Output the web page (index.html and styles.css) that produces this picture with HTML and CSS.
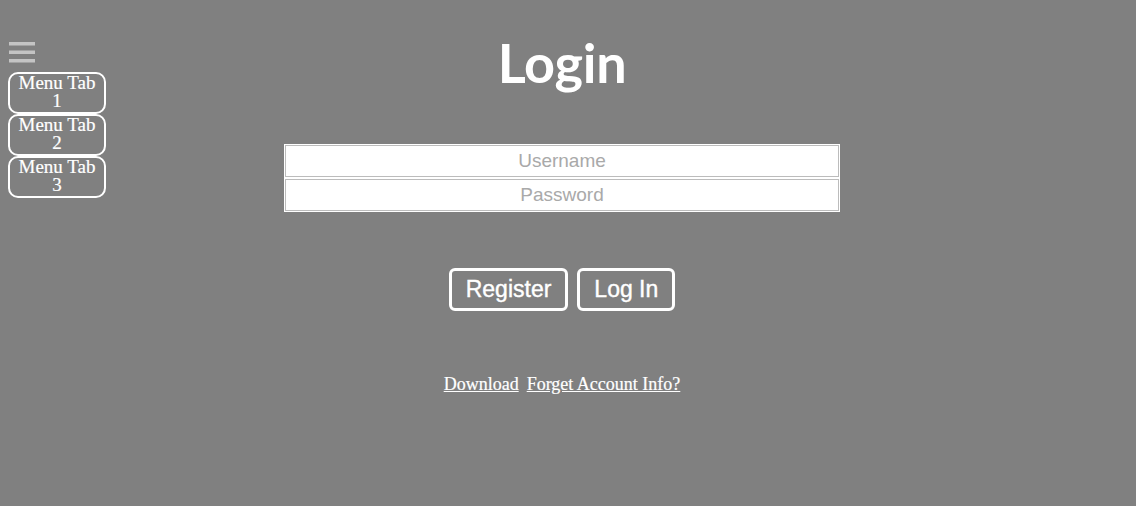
FILE: index.html
```html
<!DOCTYPE html>
<html>
<head>
<meta charset="utf-8">
<link rel="stylesheet" href="styles.css">
</head>
<body>
<nav class="sidebar">
  <svg class="burger" width="27" height="22" viewBox="0 0 27 22">
    <rect x="0" y="0" width="26" height="3.5" fill="#c4c4c4"/>
    <rect x="0" y="8.5" width="26" height="3.5" fill="#c4c4c4"/>
    <rect x="0" y="17" width="26" height="3.5" fill="#c4c4c4"/>
  </svg>
  <a class="tab">Menu Tab 1</a>
  <a class="tab">Menu Tab 2</a>
  <a class="tab">Menu Tab 3</a>
</nav>
<main class="main">
  <h1 class="title">Login</h1>
  <div class="fields">
    <input class="field" type="text" placeholder="Username">
    <input class="field" type="password" placeholder="Password">
  </div>
  <div class="actions">
    <button class="btn">Register</button>
    <button class="btn">Log In</button>
  </div>
  <div class="links">
    <a class="link" href="#">Download</a>
    <a class="link" href="#">Forget Account Info?</a>
  </div>
</main>
</body>
</html>
```
FILE: styles.css
```css
html, body {
  margin: 0;
  padding: 0;
  background: #808080;
  height: 100%;
}
body {
  position: relative;
  font-family: "Liberation Sans", Arial, sans-serif;
  color: #fff;
}
.sidebar {
  position: absolute;
  left: 8px;
  top: 42px;
  width: 98px;
  display: flex;
  flex-direction: column;
}
.burger {
  display: block;
  margin-left: 1px;
  margin-bottom: 8px;
}
.tab {
  box-sizing: border-box;
  width: 98px;
  height: 42px;
  border: 2px solid #fff;
  border-radius: 10px;
  padding: 0 4px 2px;
  font-family: "Liberation Serif", "Times New Roman", serif;
  font-size: 19px;
  line-height: 18px;
  text-align: center;
  color: #fff;
  -webkit-text-stroke: 0.2px #fff;
  display: flex;
  align-items: center;
  justify-content: center;
}
.main {
  padding-right: 12px;
  display: flex;
  flex-direction: column;
  align-items: center;
  padding-top: 31px;
}
.title {
  margin: 0;
  font-family: Lato, "Open Sans", sans-serif;
  font-weight: 700;
  font-size: 54px;
  letter-spacing: -0.3px;
  line-height: 64px;
  color: #fff;
}
.fields {
  margin-top: 50px;
  display: flex;
  flex-direction: column;
  gap: 2px;
}
.field {
  box-sizing: border-box;
  width: 554px;
  height: 32px;
  margin: 0;
  border: 1px solid #bcbcbc;
  box-shadow: 0 0 0 1px #fff;
  background: #fff;
  text-align: center;
  font-family: "Liberation Sans", Arial, sans-serif;
  font-size: 19px;
  color: #333;
  outline: none;
  padding: 0;
}
.field::placeholder {
  color: #a9a9a9;
}
.actions {
  margin-top: 57px;
  display: flex;
  gap: 9px;
}
.btn {
  box-sizing: border-box;
  height: 43px;
  border: 3px solid #fff;
  border-radius: 6px;
  background: transparent;
  color: #fff;
  font-family: "Liberation Sans", Arial, sans-serif;
  font-size: 23px;
  line-height: 27px;
  padding: 5px 14px;
  -webkit-text-stroke: 0.4px #fff;
}
.links {
  margin-top: 63px;
  display: flex;
  gap: 8px;
  font-family: "Liberation Serif", "Times New Roman", serif;
  font-size: 18px;
  line-height: 20px;
}
.link {
  color: #fff;
  text-decoration: underline;
  -webkit-text-stroke: 0.2px #fff;
}
```
